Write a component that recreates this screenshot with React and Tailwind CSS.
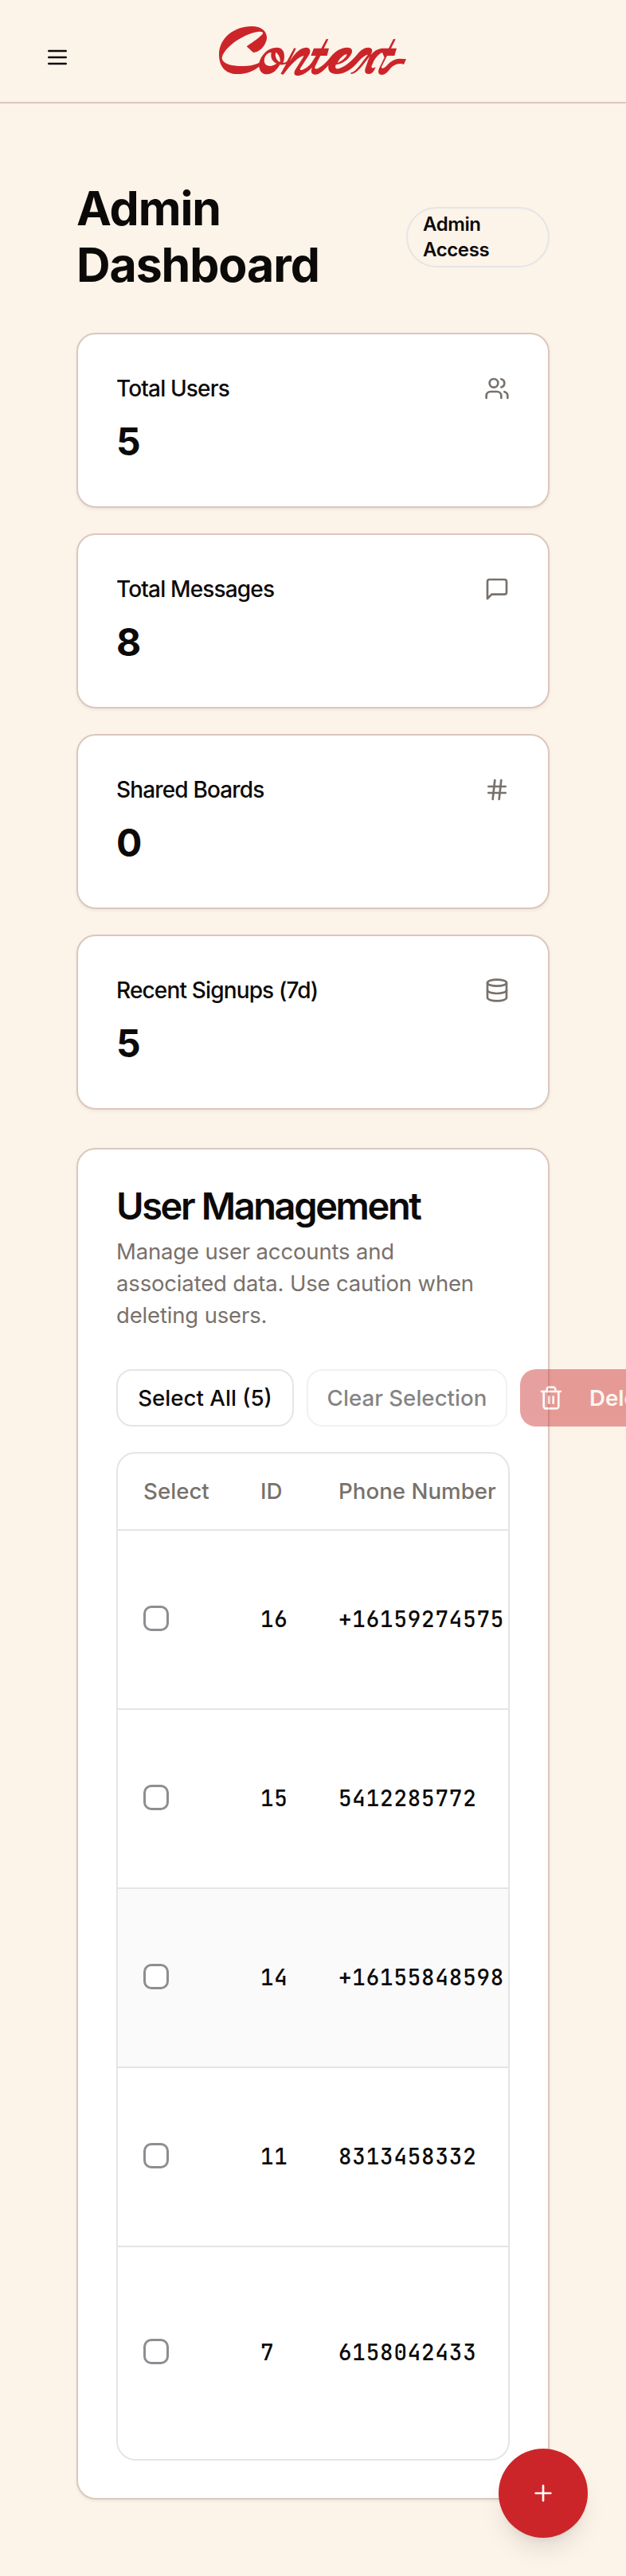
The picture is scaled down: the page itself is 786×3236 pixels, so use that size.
import { Users, Hash, Database } from "lucide-react";

const svgProps = {
  viewBox: "0 0 24 24",
  fill: "none",
  stroke: "currentColor",
  strokeWidth: 2,
  strokeLinecap: "round",
  strokeLinejoin: "round",
};

function MessageIcon({ className }) {
  return (
    <svg {...svgProps} className={className}>
      <path d="M21 15a2 2 0 0 1-2 2H7l-4 4V5a2 2 0 0 1 2-2h14a2 2 0 0 1 2 2z" />
    </svg>
  );
}

function TrashIcon({ className }) {
  return (
    <svg {...svgProps} className={className}>
      <path d="M3 6h18" />
      <path d="M19 6v14c0 1-1 2-2 2H7c-1 0-2-1-2-2V6" />
      <path d="M8 6V4c0-1 1-2 2-2h4c1 0 2 1 2 2v2" />
      <path d="M10 11v6" />
      <path d="M14 11v6" />
    </svg>
  );
}

function Logo() {
  return (
    <svg viewBox="0 0 780 270" className="h-[90px] w-[260px] text-[#cc2529]" fill="currentColor" aria-label="Context">
      <path fillRule="evenodd" d="M174 138L149 115C178 95 202 78 210 67C212 59 202 58 190 60C130 70 62 122 56 158C58 182 98 189 130 189C160 189 183 184 196 176C204 148 228 119 262 119C283 119 291 133 291 152C291 163 289 170 286 176C292 177 297 175 301 171L328 121L335 123L311 172C326 146 350 119 373 119C389 119 392 133 384 147L352 196C348 203 352 206 359 203C376 197 390 184 399 168L410 150H391L402 122H430L449 87L457 88L440 122H459L452 150H427L407 190C403 199 410 203 419 197C433 190 448 176 459 163C475 139 500 119 528 119C548 119 551 133 540 149C527 169 507 180 485 184C480 200 488 202 500 197C522 190 550 164 567 143C579 128 593 119 607 119C622 119 625 130 619 141L617 146C628 132 642 124 658 122H684L702 87L710 88L693 122H714L706 150H678L658 190C654 199 662 200 672 192C686 177 702 161 725 161L750 163L741 183C731 178 717 180 704 187C687 196 679 222 659 222C646 222 642 212 648 198L668 157L660 138C642 145 629 165 622 184C615 197 622 200 635 192C629 210 620 219 609 219C596 219 592 210 597 195L612 152C590 180 565 219 541 219L542 214C563 209 580 178 606 146C596 147 582 158 569 173C546 200 519 219 488 219C464 219 454 207 457 186C442 204 424 221 407 221C393 221 389 210 396 194C377 212 358 225 341 225C328 225 325 216 332 203L365 151C350 151 331 170 309 193L287 221L277 218L298 181C290 184 280 185 274 184C263 205 246 220 226 220C208 220 198 209 196 191C174 209 146 219 113 219C70 219 45 190 45 146C45 82 104 39 168 39C203 39 225 56 225 82C225 103 204 137 174 138ZM242 138C223 137 211 160 217 178C223 193 249 191 262 179C246 172 238 158 242 138ZM259 137C254 150 261 168 275 174C277 160 270 144 259 137ZM491 177C511 169 529 151 526 145C520 142 499 158 491 177Z" />
    </svg>
  );
}

const stats = [
  { label: "Total Users", value: 5, Icon: Users },
  { label: "Total Messages", value: 8, Icon: MessageIcon },
  { label: "Shared Boards", value: 0, Icon: Hash },
  { label: "Recent Signups (7d)", value: 5, Icon: Database },
];

const users = [
  { id: 16, phone: "+16159274575", row: "h-[225px]" },
  { id: 15, phone: "5412285772", row: "h-[225px]" },
  { id: 14, phone: "+16155848598", row: "h-[225px] bg-[#fafafa]" },
  { id: 11, phone: "8313458332", row: "h-[225px]" },
  { id: 7, phone: "6158042433", row: "h-[266px]" },
];

function StatCard({ label, value, Icon }) {
  return (
    <section className="h-[220px] rounded-3xl border-2 border-[#dbc7bd] bg-white p-12 shadow-[0_2px_4px_rgba(0,0,0,0.06)]">
      <div className="flex h-10 items-center justify-between">
        <h3 className="text-[28px] leading-10 font-medium tracking-[-0.85px]">{label}</h3>
        <Icon className="size-8 text-[#78716c]" />
      </div>
      <div className="mt-4 text-5xl leading-[62px] font-bold">{value}</div>
    </section>
  );
}

export default function App() {
  return (
    <div className="relative h-[3236px] w-[786px] overflow-hidden bg-[#fcf3e9] font-['Inter',sans-serif] text-[#0c0a09]">
      <header className="relative flex h-[130px] items-center border-b-2 border-[#dbc7bd] px-14 pt-4">
        <button className="size-8" aria-label="Menu">
          <svg {...svgProps} className="size-8">
            <path d="M4 6h16M4 12h16M4 18h16" />
          </svg>
        </button>
        <div className="absolute top-5 left-[260px]">
          <Logo />
        </div>
      </header>

      <main className="flex flex-col px-24 pt-24">
        <div className="flex items-center justify-between">
          <h1 className="w-[330px] pb-0.5 text-[59px] leading-[71px] font-bold tracking-[-1.1px]">Admin Dashboard</h1>
          <span className="w-[180px] rounded-full border-2 border-[#e5e5e5] py-1 pr-5 pl-[19px] text-2xl leading-8 font-semibold tracking-[-0.4px]">
            Admin
            <br />
            Access
          </span>
        </div>

        <div className="mt-12 flex flex-col gap-8">
          {stats.map((s) => (
            <StatCard key={s.label} {...s} />
          ))}
        </div>

        <section className="mt-12 h-[1698px] rounded-3xl border-2 border-[#dbc7bd] bg-white p-12 shadow-[0_2px_4px_rgba(0,0,0,0.06)]">
          <h2 className="pb-[3px] text-[47px] leading-[45px] font-semibold tracking-[-2.4px] whitespace-nowrap">
            User Management
          </h2>
          <p className="mt-3 text-[27.5px] leading-10 tracking-[-0.16px] text-[#78716c]">
            Manage user accounts and
            <br />
            associated data. Use caution when
            <br />
            deleting users.
          </p>

          <div className="mt-12 flex gap-4 text-[27.7px] leading-10 font-medium whitespace-nowrap">
            <button className="h-[72px] w-[223px] shrink-0 rounded-[20px] border-2 border-[#e5e5e5]">Select All (5)</button>
            <button className="h-[72px] w-[252px] shrink-0 rounded-[20px] border-2 border-[#e5e5e5] opacity-50">
              Clear Selection
            </button>
            <button className="flex h-[72px] shrink-0 items-center rounded-[20px] bg-[#d14343] pr-6 pl-[23px] font-semibold text-[#fafaf9] opacity-50">
              <TrashIcon className="mr-8 size-8" />
              Delete Selected (0)
            </button>
          </div>

          <div className="mt-8 overflow-hidden rounded-3xl border-2 border-[#e5e5e5]">
            <div className="flex h-[97px] items-center border-b-2 border-[#e5e5e5] pl-8 text-[27.7px] font-medium whitespace-nowrap text-[#78716c]">
              <div className="w-[147px] shrink-0">Select</div>
              <div className="w-[98px] shrink-0">ID</div>
              <div>Phone Number</div>
            </div>
            {users.map((u) => (
              <div
                key={u.id}
                className={
                  "flex items-center border-b-2 border-[#e5e5e5] pl-8 font-['JetBrains_Mono','DejaVu_Sans_Mono',monospace] text-[27.5px] font-medium tracking-[0.85px] last:border-b-0 " +
                  u.row
                }
              >
                <div className="w-[147px] shrink-0 pb-1">
                  <div className="size-8 rounded-[10px] border-[3px] border-[#8e8d92] bg-white" />
                </div>
                <div className="w-[98px] shrink-0">{u.id}</div>
                <div>{u.phone}</div>
              </div>
            ))}
          </div>
        </section>
      </main>

      <button
        className="absolute top-[3076px] left-[626px] flex size-28 items-center justify-center rounded-full bg-[#cc2529] text-white shadow-[0_20px_30px_-6px_rgba(0,0,0,0.1),0_8px_12px_-8px_rgba(0,0,0,0.1)]"
        aria-label="Add"
      >
        <svg {...svgProps} className="size-8">
          <path d="M5 12h14M12 5v14" />
        </svg>
      </button>
    </div>
  );
}
